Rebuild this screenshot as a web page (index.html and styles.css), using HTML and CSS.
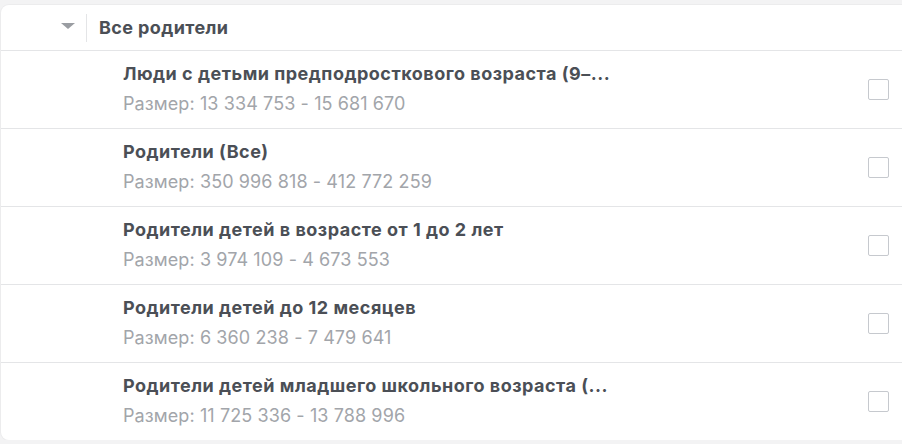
FILE: index.html
```html
<!DOCTYPE html>
<html lang="ru">
<head>
  <meta charset="UTF-8" />
  <title>Все родители</title>
  <link rel="stylesheet" href="styles.css">
</head>
<body>
  <div class="panel">
    <div class="group-head">
      <span class="caret"></span>
      <span class="divider"></span>
      <span class="group-title">Все родители</span>
    </div>

    <div class="item">
      <div class="item-text">
        <div class="item-name">Люди с детьми предподросткового возраста (9–...</div>
        <div class="item-size">Размер: 13 334 753 - 15 681 670</div>
      </div>
      <span class="check"></span>
    </div>
    <div class="item">
      <div class="item-text">
        <div class="item-name">Родители (Все)</div>
        <div class="item-size">Размер: 350 996 818 - 412 772 259</div>
      </div>
      <span class="check"></span>
    </div>
    <div class="item">
      <div class="item-text">
        <div class="item-name">Родители детей в возрасте от 1 до 2 лет</div>
        <div class="item-size">Размер: 3 974 109 - 4 673 553</div>
      </div>
      <span class="check"></span>
    </div>
    <div class="item">
      <div class="item-text">
        <div class="item-name">Родители детей до 12 месяцев</div>
        <div class="item-size">Размер: 6 360 238 - 7 479 641</div>
      </div>
      <span class="check"></span>
    </div>
    <div class="item">
      <div class="item-text">
        <div class="item-name">Родители детей младшего школьного возраста (...</div>
        <div class="item-size">Размер: 11 725 336 - 13 788 996</div>
      </div>
      <span class="check"></span>
    </div>
  </div>
</body>
</html>
```

FILE: styles.css
```css
* {
  margin: 0;
  padding: 0;
  box-sizing: border-box;
}

body {
  background-color: #f3f3f4;
  font-family: Inter, "Liberation Sans", Arial, sans-serif;
  padding: 5px 0 0 1px;
  overflow: hidden;
}

.panel {
  width: 920px;
  background-color: #fff;
  border-radius: 8px;
  box-shadow: 0 0 0 1px #ececed;
}

.group-head {
  height: 46px;
  display: flex;
  align-items: center;
  border-bottom: 1px solid #e4e5e7;
}

.caret {
  width: 0;
  height: 0;
  margin-left: 60px;
  border-left: 7px solid transparent;
  border-right: 7px solid transparent;
  border-top: 6px solid #9a9da2;
  margin-top: -3px;
}

.divider {
  width: 1px;
  height: 28px;
  background-color: #e4e5e7;
  margin: 0 12px 0 11px;
}

.group-title {
  font-size: 18px;
  font-weight: bold;
  color: #4b4f56;
  letter-spacing: 0.4px;
  margin-top: -1px;
}

.item {
  height: 78px;
  display: flex;
  align-items: center;
  padding-left: 122px;
  border-bottom: 1px solid #e4e5e7;
}

.item:last-child {
  border-bottom: none;
  height: 77px;
}

.item-text {
  width: 745px;
  margin-top: -2px;
}

.item-name {
  font-size: 18px;
  font-weight: bold;
  color: #4b4f56;
  line-height: 20px;
  letter-spacing: 0.5px;
}

.item-size {
  font-size: 18px;
  color: #a2a5aa;
  line-height: 20px;
  margin-top: 10px;
  letter-spacing: 0.1px;
}

.check {
  width: 21px;
  height: 21px;
  border: 1.5px solid #c6c9ce;
  border-radius: 2px;
}
```
